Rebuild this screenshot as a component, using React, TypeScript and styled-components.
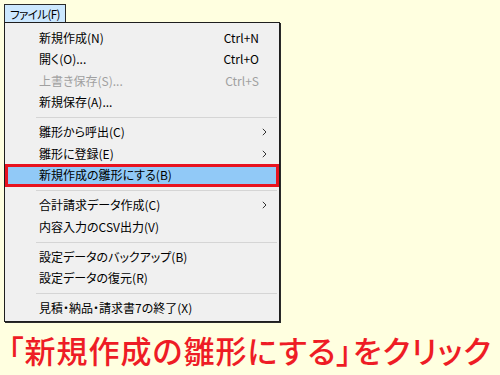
import React from 'react';
import styled, { createGlobalStyle } from 'styled-components';

const GlobalStyle = createGlobalStyle`
  html, body {
    margin: 0;
    padding: 0;
    background: #ffffe0;
  }
  body {
    font-family: "Noto Sans CJK JP", "Noto Sans", sans-serif;
    font-feature-settings: "palt";
  }
`;

const Page = styled.div`
  width: 500px;
  height: 375px;
  padding: 4px 0 0 4px;
  box-sizing: border-box;
  background: #ffffe0;
  overflow: hidden;
`;

const Tab = styled.div`
  display: flex;
  align-items: center;
  width: 62px;
  height: 18px;
  box-sizing: border-box;
  border: 1px solid #2a2a2a;
  border-bottom: none;
  background: #cce8ff;
  padding-left: 5px;
  font-size: 11.5px;
  letter-spacing: -0.6px;
  white-space: nowrap;
  color: #000;
`;

const Panel = styled.div`
  width: 276px;
  box-sizing: border-box;
  border: 1px solid #1e1e1e;
  box-shadow: 1px 1px 0 #2a2a2a;
  background: #f0f0f0;
  padding: 4px 0 2px 0;
  display: flex;
  flex-direction: column;
`;

const Item = styled.div<{ $disabled?: boolean; $active?: boolean }>`
  display: flex;
  align-items: center;
  height: ${(p) => (p.$active ? '23px' : '21.5px')};
  margin: ${(p) => (p.$active ? '-0.75px 0' : '0')};
  box-sizing: border-box;
  padding: 0 12px 0 ${(p) => (p.$active ? '31px' : '34px')};
  font-size: 12px;
  line-height: 1;
  white-space: nowrap;
  color: ${(p) => (p.$disabled ? '#a0a0a0' : '#000')};
  background: ${(p) => (p.$active ? '#91c9f7' : 'transparent')};
  border: ${(p) => (p.$active ? '3px solid #e8131f' : 'none')};
`;

const Label = styled.span`
  flex: 1;
`;

const Shortcut = styled.span<{ $disabled?: boolean }>`
  color: ${(p) => (p.$disabled ? '#a0a0a0' : '#000')};
  margin-right: 8px;
`;

const Arrow = styled.svg`
  width: 5px;
  height: 8px;
`;

const Separator = styled.div`
  height: 1px;
  margin: 4px 2px 3.5px 31px;
  background: #d5d5d5;
`;

const Caption = styled.div`
  margin-top: 10px;
  margin-left: -4px;
  width: 500px;
  text-align: center;
  font-size: 31px;
  font-weight: 500;
  color: #ee1c25;
  line-height: 36px;
  letter-spacing: 1px;
  white-space: nowrap;
`;

type Entry =
  | { sep: true }
  | { label: string; shortcut?: string; disabled?: boolean; sub?: boolean; active?: boolean };

const entries: Entry[] = [
  { label: '新規作成(N)', shortcut: 'Ctrl+N' },
  { label: '開く(O)...', shortcut: 'Ctrl+O' },
  { label: '上書き保存(S)...', shortcut: 'Ctrl+S', disabled: true },
  { label: '新規保存(A)...' },
  { sep: true },
  { label: '雛形から呼出(C)', sub: true },
  { label: '雛形に登録(E)', sub: true },
  { label: '新規作成の雛形にする(B)', active: true },
  { sep: true },
  { label: '合計請求データ作成(C)', sub: true },
  { label: '内容入力のCSV出力(V)' },
  { sep: true },
  { label: '設定データのバックアップ(B)' },
  { label: '設定データの復元(R)' },
  { sep: true },
  { label: '見積・納品・請求書7の終了(X)' },
];

export default function App() {
  return (
    <Page>
      <GlobalStyle />
      <Tab>ファイル(F)</Tab>
      <Panel>
        {entries.map((e, i) =>
          'sep' in e ? (
            <Separator key={i} />
          ) : (
            <Item key={i} $disabled={e.disabled} $active={e.active}>
              <Label>{e.label}</Label>
              {e.shortcut && <Shortcut $disabled={e.disabled}>{e.shortcut}</Shortcut>}
              {e.sub && (
                <Arrow viewBox="0 0 5 8">
                  <path d="M0.8 0.8 L4 4 L0.8 7.2" fill="none" stroke="#333" strokeWidth="1" />
                </Arrow>
              )}
            </Item>
          )
        )}
      </Panel>
      <Caption>「新規作成の雛形にする」をクリック</Caption>
    </Page>
  );
}
